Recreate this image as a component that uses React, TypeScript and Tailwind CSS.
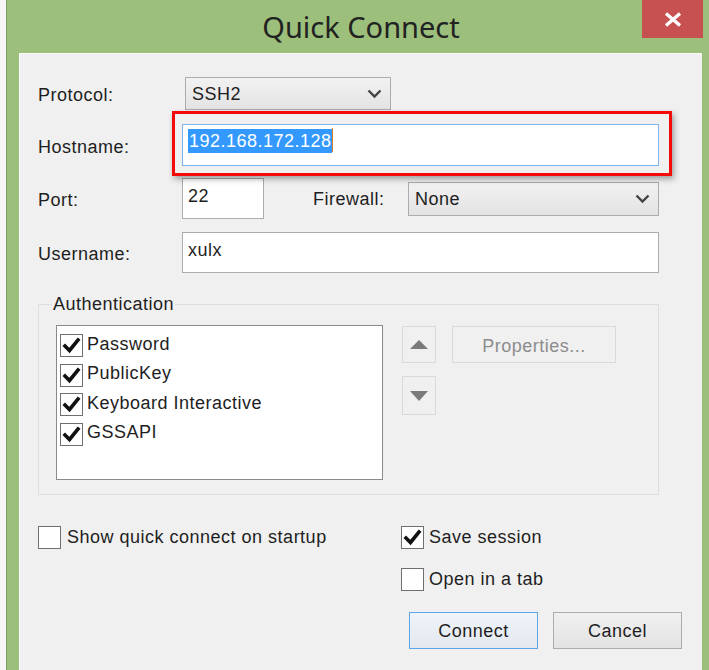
import type { ReactNode } from "react"

const body = { fontFamily: '"Liberation Sans", Arial, sans-serif', letterSpacing: "0.5px" }

function Check({ checked }: { checked?: boolean }) {
  return (
    <span className="flex h-[23px] w-[23px] shrink-0 items-center justify-center border border-[#6f6f6f] bg-white">
      {checked && (
        <svg width="19" height="19" viewBox="0 0 19 19">
          <path d="M3 10 L7.5 14.5 L16 4" fill="none" stroke="#111" strokeWidth="3.6" strokeLinecap="square" />
        </svg>
      )}
    </span>
  )
}

function Chevron() {
  return (
    <svg width="15" height="10" viewBox="0 0 15 10">
      <path d="M1.5 1.5 L7.5 7.5 L13.5 1.5" fill="none" stroke="#444" strokeWidth="2.4" />
    </svg>
  )
}

function Select({ value, className }: { value: string; className: string }) {
  return (
    <div
      className={`flex items-center justify-between border border-[#acacac] bg-gradient-to-b from-[#f2f2f2] to-[#e3e3e3] pl-[6px] pr-[8px] text-[#1e1e1e] ${className}`}
    >
      <span className="pt-[2px]">{value}</span>
      <Chevron />
    </div>
  )
}

function Label({ children, w }: { children: ReactNode; w: string }) {
  return <span className={`${w} shrink-0 pt-[4px] text-[#1e1e1e]`}>{children}</span>
}

export default function App() {
  const methods = ["Password", "PublicKey", "Keyboard Interactive", "GSSAPI"]

  return (
    <div className="h-[670px] w-[709px] overflow-hidden bg-[#f7f7f7] pl-[6px]" style={body}>
      <div className="flex h-full flex-col border-l border-[#7c9e5e] bg-[#9dbf7c]">
        {/* title bar */}
        <div className="relative flex h-[53px] shrink-0 items-center justify-center">
          <span
            className="pl-[6px] text-[29px] tracking-normal text-[#222]"
            style={{ fontFamily: '"Noto Sans", "Open Sans", sans-serif' }}
          >
            Quick Connect
          </span>
          <div className="absolute right-[6px] top-0 flex h-[38px] w-[61px] items-center justify-center bg-[#c75050]">
            <svg width="18" height="15" viewBox="0 0 18 15">
              <path d="M2 1.5 L16 13.5 M16 1.5 L2 13.5" stroke="#fff" strokeWidth="3.4" />
            </svg>
          </div>
        </div>

        {/* client area */}
        <div className="ml-[12px] mr-[7px] flex-1 border-l border-t border-[#fbfbfb] bg-[#f0f0f0] pl-[18px] pt-[23px] text-[18px]">
          <div className="flex h-[33px] items-center">
            <Label w="w-[147px]">Protocol:</Label>
            <Select value="SSH2" className="h-[33px] w-[206px]" />
          </div>

          <div className="mt-[14px] flex h-[42px] items-center">
            <Label w="w-[144px]">Hostname:</Label>
            <div className="relative h-[42px] w-[477px]">
              <div className="absolute -bottom-[10px] -left-[10px] -right-[13px] -top-[13px] border-[3px] border-[#f50a0a] shadow-[2px_3px_6px_rgba(0,0,0,0.35)]" />
              <div className="relative h-full border border-[#7eb4ea] bg-white pl-[5px] pt-[3px]">
                <span className="inline-block bg-[#3399ff] pl-[1px] leading-[24px] text-white">192.168.172.128</span>
                <span className="inline-block h-[24px] w-[1px] bg-[#d9822b] align-top" />
              </div>
            </div>
          </div>

          <div className="mt-[12px] flex h-[41px] items-center">
            <Label w="w-[144px]">Port:</Label>
            <div className="h-[41px] w-[82px] border border-[#acacac] bg-white pl-[5px] pt-[6px] leading-[22px] text-[#1e1e1e]">
              22
            </div>
            <span className="ml-[49px] w-[95px] pt-[2px] text-[#1e1e1e]">Firewall:</span>
            <Select value="None" className="h-[34px] w-[251px]" />
          </div>

          <div className="mt-[13px] flex h-[41px] items-center">
            <Label w="w-[144px]">Username:</Label>
            <div className="h-[41px] w-[477px] border border-[#acacac] bg-white pl-[5px] pt-[6px] leading-[22px] text-[#1e1e1e]">
              xulx
            </div>
          </div>

          {/* authentication group */}
          <div className="relative mt-[31px] h-[191px] w-[621px] border border-[#d9dfe3]">
            <span className="absolute left-[13px] top-[-12px] bg-[#f0f0f0] px-[1px] leading-[22px] text-[#1e1e1e]">
              Authentication
            </span>
            <div className="flex pl-[17px] pt-[20px]">
              <div className="h-[155px] w-[327px] border border-[#8a8a8a] bg-white pl-[3px] pt-[5px]">
                {methods.map((m) => (
                  <div key={m} className="flex h-[29.5px] items-center gap-[4px] text-[#1e1e1e]">
                    <Check checked />
                    <span className="-mt-[3px]">{m}</span>
                  </div>
                ))}
              </div>
              <div className="ml-[19px] mt-[1px] flex flex-col">
                <div className="flex h-[37px] w-[34px] items-center justify-center border border-[#dadada]">
                  <svg width="18" height="9" viewBox="0 0 18 9">
                    <path d="M9 0 L18 9 L0 9 Z" fill="#7a7a7a" />
                  </svg>
                </div>
                <div className="mt-[13px] flex h-[39px] w-[34px] items-center justify-center border border-[#dadada]">
                  <svg width="18" height="10" viewBox="0 0 18 10">
                    <path d="M0 0 L18 0 L9 10 Z" fill="#7a7a7a" />
                  </svg>
                </div>
              </div>
              <div className="ml-[16px] mt-[1px] flex h-[37px] w-[164px] items-center justify-center border border-[#dadada] pt-[3px] text-[#8c8c8c]">
                Properties...
              </div>
            </div>
          </div>

          {/* bottom options */}
          <div className="mt-[31px] flex">
            <div className="flex h-[23px] w-[363px] items-center gap-[6px] text-[#1e1e1e]">
              <Check />
              <span>Show quick connect on startup</span>
            </div>
            <div className="flex flex-col">
              <div className="flex h-[23px] items-center gap-[5px] text-[#1e1e1e]">
                <Check checked />
                <span>Save session</span>
              </div>
              <div className="mt-[18px] flex h-[24px] items-center gap-[5px] text-[#1e1e1e]">
                <Check />
                <span>Open in a tab</span>
              </div>
              <div className="ml-[8px] mt-[21px] flex">
                <div className="flex h-[37px] w-[129px] items-center justify-center border border-[#5ea5e8] bg-gradient-to-b from-[#eef4fa] to-[#e3e8ee] pt-[2px] text-[#1e1e1e]">
                  Connect
                </div>
                <div className="ml-[15px] flex h-[37px] w-[129px] items-center justify-center border border-[#acacac] bg-gradient-to-b from-[#f0f0f0] to-[#e3e3e3] pt-[2px] text-[#1e1e1e]">
                  Cancel
                </div>
              </div>
            </div>
          </div>
        </div>
      </div>
    </div>
  )
}
